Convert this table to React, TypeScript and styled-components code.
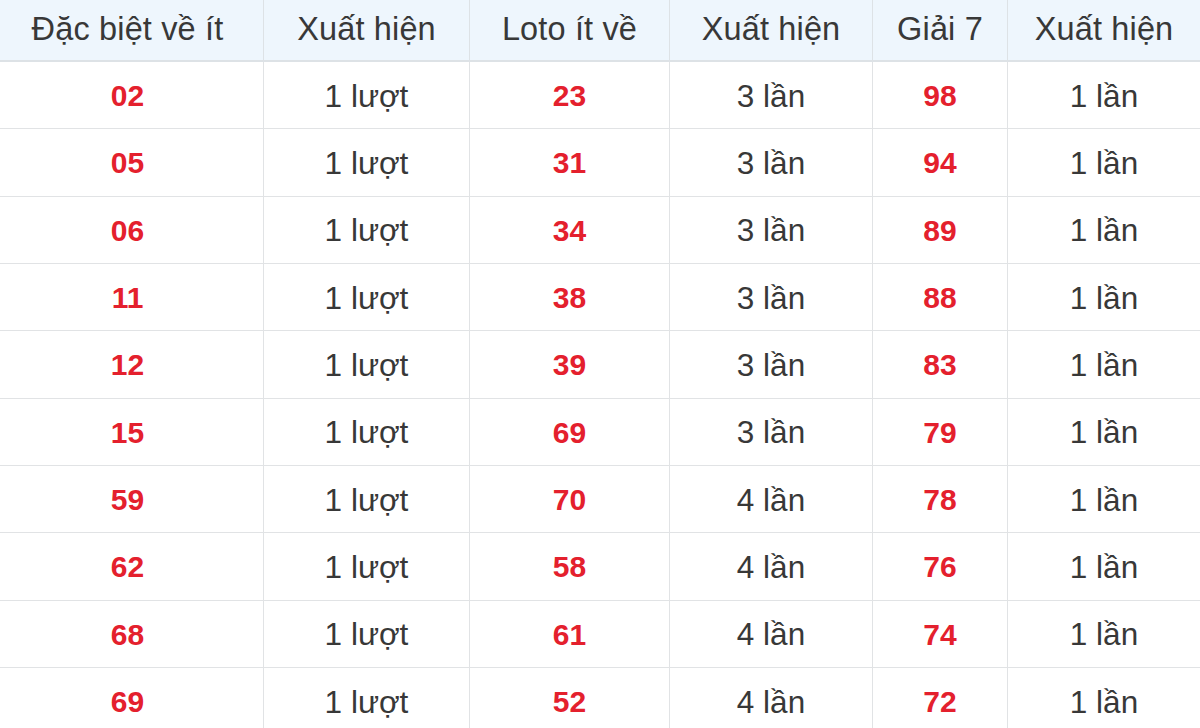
import React from "react";
import styled, { createGlobalStyle } from "styled-components";

const Global = createGlobalStyle`
  html, body { margin: 0; padding: 0; background: #ffffff; overflow: hidden; }
  body { font-family: "Liberation Sans", Arial, sans-serif; }
`;

const Viewport = styled.div`
  width: 1200px;
  height: 728px;
  overflow: hidden;
`;

const Table = styled.div`
  display: grid;
  grid-template-columns: 272px 206px 200px 203px 135px 192px;
  grid-template-rows: 62px;
  grid-auto-rows: 67.33px;
  width: 1208px;
  margin-left: -8px;
`;

const HeadCell = styled.div<{ $last?: boolean }>`
  display: flex;
  align-items: center;
  justify-content: center;
  background: #eef6fd;
  color: #383838;
  font-size: 32.5px;
  letter-spacing: 0.15px;
  border-bottom: 2px solid #dde2e6;
  border-right: ${(p) => (p.$last ? "none" : "1px solid #dde2e6")};
  padding-bottom: 2px;
  box-sizing: border-box;
  white-space: nowrap;
`;

const Cell = styled.div<{ $hot?: boolean; $last?: boolean }>`
  display: flex;
  align-items: center;
  justify-content: center;
  color: ${(p) => (p.$hot ? "#e4202d" : "#383838")};
  font-weight: ${(p) => (p.$hot ? 700 : 400)};
  font-size: ${(p) => (p.$hot ? "30px" : "31.5px")};
  padding-top: 2px;
  border-bottom: 1px solid #e1e3e5;
  border-right: ${(p) => (p.$last ? "none" : "1px solid #e1e3e5")};
  box-sizing: border-box;
  white-space: nowrap;
`;

const headers = ["Đặc biệt về ít", "Xuất hiện", "Loto ít về", "Xuất hiện", "Giải 7", "Xuất hiện"];

const rows: [string, string, string, string, string, string][] = [
  ["02", "1 lượt", "23", "3 lần", "98", "1 lần"],
  ["05", "1 lượt", "31", "3 lần", "94", "1 lần"],
  ["06", "1 lượt", "34", "3 lần", "89", "1 lần"],
  ["11", "1 lượt", "38", "3 lần", "88", "1 lần"],
  ["12", "1 lượt", "39", "3 lần", "83", "1 lần"],
  ["15", "1 lượt", "69", "3 lần", "79", "1 lần"],
  ["59", "1 lượt", "70", "4 lần", "78", "1 lần"],
  ["62", "1 lượt", "58", "4 lần", "76", "1 lần"],
  ["68", "1 lượt", "61", "4 lần", "74", "1 lần"],
  ["69", "1 lượt", "52", "4 lần", "72", "1 lần"],
];

export default function App() {
  return (
    <>
      <Global />
      <Viewport>
        <Table>
          {headers.map((h, i) => (
            <HeadCell key={"h" + i} $last={i === 5}>
              {h}
            </HeadCell>
          ))}
          {rows.map((r, ri) =>
            r.map((v, ci) => (
              <Cell key={ri + "-" + ci} $hot={ci % 2 === 0} $last={ci === 5}>
                {v}
              </Cell>
            ))
          )}
        </Table>
      </Viewport>
    </>
  );
}
